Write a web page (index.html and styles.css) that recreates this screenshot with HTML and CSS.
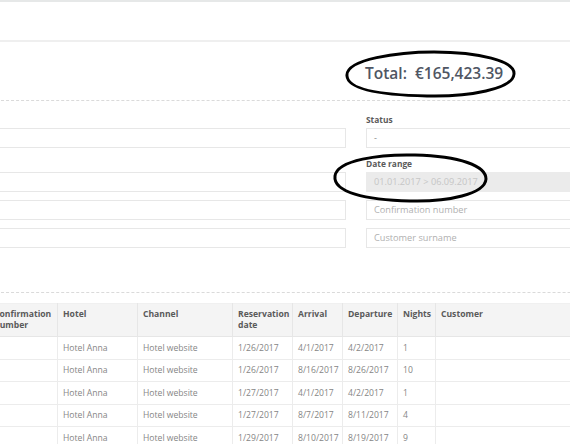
FILE: index.html
```html
<!DOCTYPE html>
<html lang="en">
<head>
<meta charset="utf-8">
<title>Reservations</title>
<link rel="stylesheet" href="styles.css">
</head>
<body>
<div class="page">
  <div class="topbar"></div>
  <div class="summary">
    <div></div>
    <div class="total">Total:&nbsp;&nbsp;€165,423.39</div>
  </div>
  <form class="filters">
    <div class="col">
      <div class="field"><span class="label">&nbsp;</span><div class="input"></div></div>
      <div class="field"><span class="label">&nbsp;</span><div class="input"></div></div>
      <div class="input"></div>
      <div class="input"></div>
    </div>
    <div class="col">
      <div class="field"><span class="label">Status</span><div class="input value">-</div></div>
      <div class="field"><span class="label">Date range</span><div class="input disabled">01.01.2017 &gt; 06.09.2017</div></div>
      <div class="input placeholder">Confirmation number</div>
      <div class="input placeholder">Customer surname</div>
    </div>
  </form>
  <table class="grid">
    <colgroup>
      <col class="c-conf"><col class="c-hotel"><col class="c-channel"><col class="c-res"><col class="c-arr"><col class="c-dep"><col class="c-nights"><col class="c-cust">
    </colgroup>
    <thead>
      <tr><th>Confirmation number</th><th>Hotel</th><th>Channel</th><th>Reservation date</th><th>Arrival</th><th>Departure</th><th>Nights</th><th>Customer</th></tr>
    </thead>
    <tbody>
      <tr><td></td><td>Hotel Anna</td><td>Hotel website</td><td>1/26/2017</td><td>4/1/2017</td><td>4/2/2017</td><td>1</td><td></td></tr>
      <tr><td></td><td>Hotel Anna</td><td>Hotel website</td><td>1/26/2017</td><td>8/16/2017</td><td>8/26/2017</td><td>10</td><td></td></tr>
      <tr><td></td><td>Hotel Anna</td><td>Hotel website</td><td>1/27/2017</td><td>4/1/2017</td><td>4/2/2017</td><td>1</td><td></td></tr>
      <tr><td></td><td>Hotel Anna</td><td>Hotel website</td><td>1/27/2017</td><td>8/7/2017</td><td>8/11/2017</td><td>4</td><td></td></tr>
      <tr><td></td><td>Hotel Anna</td><td>Hotel website</td><td>1/29/2017</td><td>8/10/2017</td><td>8/19/2017</td><td>9</td><td></td></tr>
    </tbody>
  </table>
</div>
<svg class="mark mark-total" width="180" height="54" viewBox="0 0 180 54"><path d="M8 29 C 6 12, 60 5, 95 5 C 140 5, 176 14, 175 27 C 174 42, 130 50, 88 49 C 40 48, 9 42, 8 29 Z" fill="none" stroke="#000" stroke-width="3"/></svg>
<svg class="mark mark-date" width="162" height="56" viewBox="0 0 162 56"><path d="M5 26 C 7 10, 50 4, 85 5 C 130 6, 156 16, 156 29 C 155 44, 118 52, 80 51 C 35 50, 3 42, 5 26 Z" fill="none" stroke="#000" stroke-width="3"/></svg>
</body>
</html>
```
FILE: styles.css
```css
html, body {
  margin: 0;
  padding: 0;
  background: #fff;
  overflow: hidden;
}
body {
  width: 570px;
  height: 444px;
  position: relative;
  font-family: "Open Sans", "DejaVu Sans", sans-serif;
  color: #555;
}
.page {
  width: 730px;
  margin-left: -9px;
}
.topbar {
  height: 38px;
  border-top: 2px solid #e6e8e8;
  border-bottom: 2px solid #efefef;
}
.summary {
  display: grid;
  grid-template-columns: 1fr 1fr;
  column-gap: 20px;
  height: 58px;
  align-items: center;
  border-bottom: 1px dashed #dadada;
}
.total {
  font-size: 15.5px;
  font-weight: 600;
  color: #4f5663;
  padding-top: 3px;
  margin-left: -1px;
}
.filters {
  display: grid;
  grid-template-columns: 1fr 1fr;
  column-gap: 20px;
  padding: 11px 0 44px;
  border-bottom: 1px dashed #dadada;
}
.col {
  display: flex;
  flex-direction: column;
  gap: 8px;
}
.field {
  display: flex;
  flex-direction: column;
  gap: 2px;
}
.label {
  font-size: 8.4px;
  line-height: 12px;
  padding-top: 2px;
  font-weight: 700;
  color: #5a5a5a;
}
.input {
  box-sizing: border-box;
  height: 20px;
  border: 1px solid #e7e7e7;
  background: #fff;
  font-size: 9.2px;
  line-height: 18px;
  padding: 0 7px;
  color: #888;
}
.input.placeholder { color: #b0b0b0; }
.input.disabled {
  background: #ebebeb;
  border-color: #ebebeb;
  color: #c6c6c6;
}
.grid {
  width: 733px;
  margin-top: 10px;
  margin-left: -3px;
  border-collapse: collapse;
  table-layout: fixed;
  font-size: 8.6px;
}
.c-conf { width: 69px; }
.c-hotel { width: 80px; }
.c-channel { width: 95px; }
.c-res { width: 60px; }
.c-arr { width: 50px; }
.c-dep { width: 55px; }
.c-nights { width: 38px; }
.grid th {
  background: #f4f4f4;
  text-align: left;
  vertical-align: top;
  font-weight: 700;
  color: #5a5a5a;
  line-height: 11px;
  height: 33px;
  box-sizing: border-box;
  padding: 5px 5px 0;
  border: 1px solid #e6e6e6;
  border-top-color: #f0f0f0;
}
.grid td {
  height: 22.5px;
  box-sizing: border-box;
  padding: 0 5px;
  color: #858585;
  border: 1px solid #ececec;
  white-space: nowrap;
}
.mark {
  position: absolute;
}
.mark-total { left: 339px; top: 47px; }
.mark-date { left: 330px; top: 150px; }
```
